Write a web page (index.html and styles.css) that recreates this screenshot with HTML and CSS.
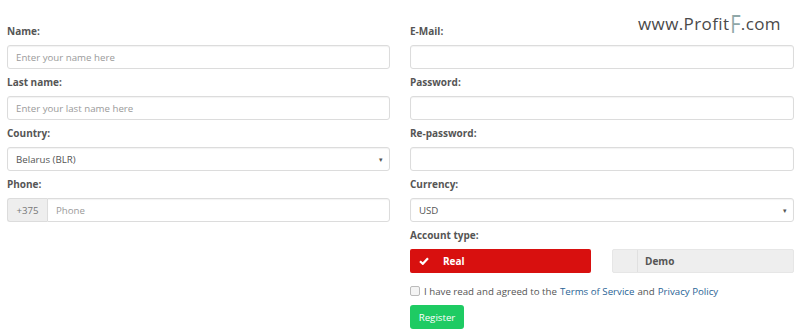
FILE: index.html
```html
<!DOCTYPE html>
<html lang="en">
<head>
    <meta charset="UTF-8">
    <meta name="viewport" content="width=device-width, initial-scale=1.0">
    <title>Register</title>
    <link rel="stylesheet" href="styles.css">
</head>
<body>
    <div class="logo">www.Profit<span class="logo-f">F</span>.com</div>

    <form class="register">
        <div class="column">
            <div class="field">
                <label>Name:</label>
                <input type="text" placeholder="Enter your name here">
            </div>
            <div class="field">
                <label>Last name:</label>
                <input type="text" placeholder="Enter your last name here">
            </div>
            <div class="field">
                <label>Country:</label>
                <div class="select">Belarus (BLR)<span class="caret">&#9662;</span></div>
            </div>
            <div class="field">
                <label>Phone:</label>
                <div class="input-group">
                    <span class="addon">+375</span>
                    <input type="text" placeholder="Phone">
                </div>
            </div>
        </div>

        <div class="column">
            <div class="field">
                <label>E-Mail:</label>
                <input type="text">
            </div>
            <div class="field">
                <label>Password:</label>
                <input type="password">
            </div>
            <div class="field">
                <label>Re-password:</label>
                <input type="password">
            </div>
            <div class="field">
                <label>Currency:</label>
                <div class="select">USD<span class="caret">&#9662;</span></div>
            </div>
            <div class="field">
                <label>Account type:</label>
                <div class="account-types">
                    <div class="type type-real">
                        <span class="type-icon">
                            <svg width="10" height="8" viewBox="0 0 10 8"><path d="M1 4.2 L3.8 6.8 L9 1.2" fill="none" stroke="#fff" stroke-width="2.2"/></svg>
                        </span>
                        Real
                    </div>
                    <div class="type type-demo">
                        <span class="type-icon"></span>
                        Demo
                    </div>
                </div>
            </div>
            <div class="agree">
                <span class="checkbox"></span>
                I have read and agreed to the <a href="#">Terms of Service</a> and <a href="#">Privacy Policy</a>
            </div>
            <button type="button" class="btn-register">Register</button>
        </div>
    </form>
</body>
</html>
```

FILE: styles.css
```css
body {
    font-family: "Open Sans", Arial, sans-serif;
    font-size: 9.7px;
    color: #555;
    background-color: #fff;
    margin: 0;
    padding: 23px 6px 0 7px;
}
.logo {
    position: absolute;
    top: 12px;
    left: 638px;
    font-size: 17px;
    color: #4a4a4a;
    letter-spacing: 0.4px;
}
.logo-f {
    color: #8fa7a8;
    font-size: 25px;
    line-height: 17px;
    display: inline-block;
    transform: translateY(3px) scaleX(0.8);
    margin: 0 -2px 0 0;
}
.register {
    display: grid;
    grid-template-columns: 383px 384px;
    column-gap: 20px;
}
.field {
    margin-bottom: 5px;
}
label {
    display: block;
    font-size: 10px;
    font-weight: bold;
    line-height: 17px;
    margin-bottom: 5px;
    color: #555;
}
input, .select {
    display: block;
    box-sizing: border-box;
    width: 100%;
    height: 24px;
    padding: 0 8px;
    font-family: inherit;
    font-size: 9.7px;
    color: #555;
    border: 1px solid #dcdcdc;
    border-radius: 3px;
    box-shadow: inset 0 1px 1px rgba(0, 0, 0, 0.05);
    background-color: #fff;
    outline: none;
}
input::placeholder {
    color: #9a9a9a;
}
.select {
    display: flex;
    align-items: center;
    justify-content: space-between;
    padding-right: 6px;
}
.caret {
    font-size: 7px;
    color: #555;
}
.input-group {
    display: flex;
    height: 24px;
}
.addon {
    display: flex;
    align-items: center;
    justify-content: center;
    width: 40px;
    box-sizing: border-box;
    background-color: #eee;
    border: 1px solid #dcdcdc;
    border-right: none;
    border-radius: 3px 0 0 3px;
    color: #777;
}
.input-group input {
    flex: 1;
    border-radius: 0 3px 3px 0;
}
.account-types {
    display: grid;
    grid-template-columns: 181px 182px;
    column-gap: 21px;
    height: 24px;
}
.type {
    display: flex;
    align-items: center;
    font-size: 10px;
    font-weight: bold;
    border-radius: 2px;
}
.type-icon {
    display: flex;
    align-items: center;
    justify-content: center;
    width: 24px;
    height: 100%;
    margin-right: 8px;
}
.type-real {
    background-color: #d8100f;
    color: #fff;
}
.type-real .type-icon {
    width: 28px;
    margin-right: 5px;
}
.type-demo {
    background-color: #eee;
    color: #555;
    border: 1px solid #e6e6e6;
    box-sizing: border-box;
}
.type-demo .type-icon {
    border-right: 1px solid #e0e0e0;
    margin-right: 7px;
}
.agree {
    display: flex;
    align-items: center;
    margin-top: 8px;
    height: 20px;
    color: #555;
}
.agree a {
    color: #2a6496;
    text-decoration: none;
    margin: 0 3px;
}
.checkbox {
    display: inline-block;
    width: 8px;
    height: 8px;
    border: 1px solid #bbb;
    border-radius: 2px;
    background-color: #f4f4f4;
    margin-right: 4px;
}
.btn-register {
    margin-top: 4px;
    width: 54px;
    height: 24px;
    padding: 0;
    font-family: inherit;
    font-size: 9.7px;
    color: #fff;
    background-color: #1ecb63;
    border: none;
    border-radius: 3px;
    cursor: pointer;
}
```
